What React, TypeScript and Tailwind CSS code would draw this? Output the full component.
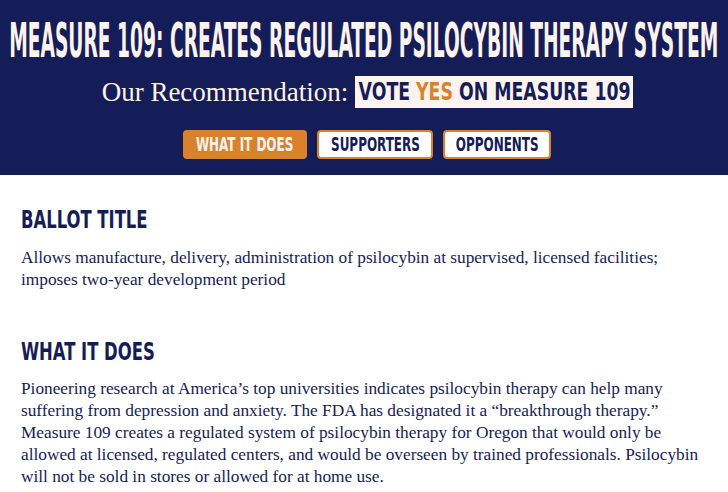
import React from "react";

const cond = { fontFamily: '"DejaVu Sans Condensed", "DejaVu Sans", sans-serif' } as const;
const serif = { fontFamily: '"Liberation Serif", "DejaVu Serif", serif' } as const;

export default function App() {
  return (
    <div className="w-[728px] h-[492px] overflow-hidden bg-white">
      <header className="bg-[#151d59] h-[175px] flex flex-col items-center pt-[16px]">
        <h1
          style={cond}
          className="text-[48px] leading-[48px] font-bold text-[#fdf3ee] whitespace-nowrap scale-x-[0.432] origin-center"
        >
          MEASURE 109: CREATES REGULATED PSILOCYBIN THERAPY SYSTEM
        </h1>
        <div className="mt-[12px] ml-[7px] flex items-center gap-[7px] h-[32px]">
          <span style={serif} className="text-[27px] leading-[32px] text-[#fdf3ee] whitespace-nowrap">
            Our Recommendation:
          </span>
          <span className="bg-[#fdf3ee] w-[278px] h-[32px] shrink-0 flex items-center justify-center">
            <span
              style={cond}
              className="inline-block shrink-0 scale-x-[0.77] text-[25px] leading-[32px] font-bold text-[#151d59] whitespace-nowrap"
            >
              VOTE <span className="text-[#d9822b]">YES</span> ON MEASURE 109
            </span>
          </span>
        </div>
        <div style={cond} className="mt-[22px] ml-[6px] flex gap-[10px]">
          <span className="w-[124px] h-[29px] rounded-[4px] bg-[#d9822b] border-2 border-[#d9822b] flex items-center justify-center">
            <span className="inline-block shrink-0 scale-x-[0.7] text-[19px] leading-[25px] font-bold text-[#fdf3ee] whitespace-nowrap">
              WHAT IT DOES
            </span>
          </span>
          <span className="w-[116px] h-[29px] rounded-[4px] bg-white border-2 border-[#d9822b] flex items-center justify-center">
            <span className="inline-block shrink-0 scale-x-[0.7] text-[19px] leading-[25px] font-bold text-[#151d59] whitespace-nowrap">
              SUPPORTERS
            </span>
          </span>
          <span className="w-[108px] h-[29px] rounded-[4px] bg-white border-2 border-[#d9822b] flex items-center justify-center">
            <span className="inline-block shrink-0 scale-x-[0.7] text-[19px] leading-[25px] font-bold text-[#151d59] whitespace-nowrap">
              OPPONENTS
            </span>
          </span>
        </div>
      </header>
      <main className="px-[21px] text-[#151d59]">
        <h2 style={cond} className="mt-[30px] text-[25px] leading-[30px] font-bold">
          <span className="inline-block scale-x-[0.73] origin-left whitespace-nowrap">BALLOT TITLE</span>
        </h2>
        <p style={serif} className="mt-[12px] text-[17.3px] leading-[22px] whitespace-nowrap">
          Allows manufacture, delivery, administration of psilocybin at supervised, licensed facilities;
          <br />
          imposes two-year development period
        </p>
        <h2 style={cond} className="mt-[46px] text-[25px] leading-[30px] font-bold">
          <span className="inline-block scale-x-[0.73] origin-left whitespace-nowrap">WHAT IT DOES</span>
        </h2>
        <p style={serif} className="mt-[11px] text-[17.3px] leading-[22px] whitespace-nowrap">
          Pioneering research at America’s top universities indicates psilocybin therapy can help many
          <br />
          suffering from depression and anxiety. The FDA has designated it a “breakthrough therapy.”
          <br />
          Measure 109 creates a regulated system of psilocybin therapy for Oregon that would only be
          <br />
          allowed at licensed, regulated centers, and would be overseen by trained professionals. Psilocybin
          <br />
          will not be sold in stores or allowed for at home use.
        </p>
      </main>
    </div>
  );
}
